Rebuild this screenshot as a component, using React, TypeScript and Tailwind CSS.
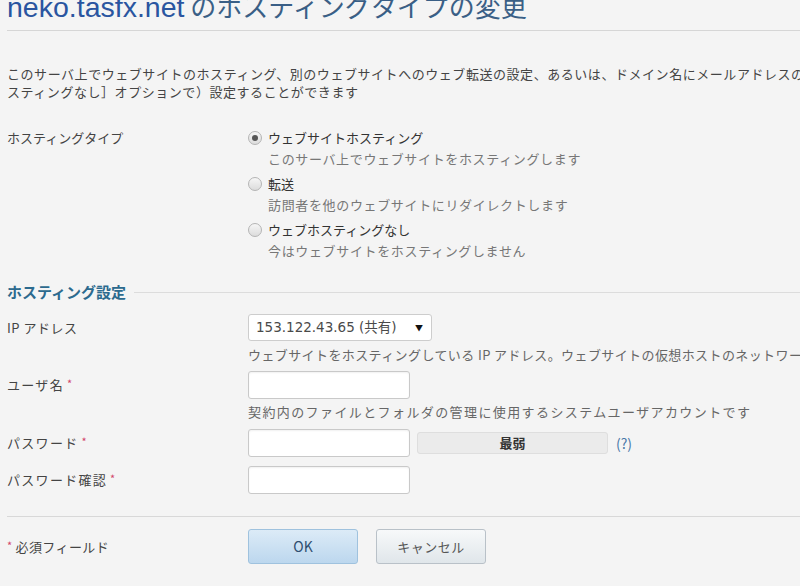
import React from 'react';

const labelCls = 'w-[241px] shrink-0 whitespace-nowrap tracking-[1.3px]';
const helpCls = 'whitespace-nowrap pl-[241px] leading-[18px] text-[#666]';
const inputCls =
  'h-[28px] w-[162px] rounded-[3px] border border-[#c9c9c9] bg-white shadow-[inset_0_1px_2px_rgba(0,0,0,0.06)]';

function Req() {
  return <span className="ml-[3px] text-[11px] text-[#d2456a] align-top">*</span>;
}

function Radio({ checked }: { checked?: boolean }) {
  return (
    <span className="flex h-[14px] w-[14px] shrink-0 items-center justify-center rounded-full border border-[#b4b4b4] bg-gradient-to-b from-[#f6f6f6] to-[#dcdcdc]">
      {checked && <span className="h-[6px] w-[6px] rounded-full bg-[#555]" />}
    </span>
  );
}

function Option({ label, desc, checked, first }: { label: string; desc: string; checked?: boolean; first?: boolean }) {
  return (
    <div className={first ? '' : 'mt-[7px]'}>
      <div className="flex h-[18px] items-center gap-[6px] leading-[18px] text-[#333]">
        <Radio checked={checked} />
        <span>{label}</span>
      </div>
      <div className="mt-[3px] whitespace-nowrap pl-[20px] leading-[18px] tracking-[0.65px] text-[#777]">{desc}</div>
    </div>
  );
}

export default function App() {
  return (
    <div className="h-[586px] w-[800px] overflow-hidden bg-[#f4f4f4] font-['Noto_Sans_CJK_JP',sans-serif] text-[13px] text-[#444]">
      <div className="w-[1100px] pl-[7px]">
        <h1 className="-mt-[9px] h-[40px] whitespace-nowrap border-b border-[#d6d6d6] leading-[30px] text-[#2a55a0]">
          <span className="font-['Liberation_Sans',sans-serif] text-[28.5px]">neko.tasfx.net</span>
          <span className="text-[26px] text-[#3a5f86]"> のホスティングタイプの変更</span>
        </h1>

        <p className="mt-[34px] whitespace-nowrap leading-[18px] tracking-[0.55px]">
          このサーバ上でウェブサイトのホスティング、別のウェブサイトへのウェブ転送の設定、あるいは、ドメイン名にメールアドレスのみを関連付ける（［ウェブホ
          <br />
          スティングなし］オプションで）設定することができます
        </p>

        <div className="mt-[28px] flex">
          <div className="w-[241px] shrink-0 leading-[18px]">ホスティングタイプ</div>
          <div>
            <Option first checked label="ウェブサイトホスティング" desc="このサーバ上でウェブサイトをホスティングします" />
            <Option label="転送" desc="訪問者を他のウェブサイトにリダイレクトします" />
            <Option label="ウェブホスティングなし" desc="今はウェブサイトをホスティングしません" />
          </div>
        </div>

        {/* Hosting settings */}
        <div className="mt-[23px] flex h-[18px] items-center gap-[8px]">
          <span className="whitespace-nowrap text-[15px] font-bold text-[#2c6a8e]">ホスティング設定</span>
          <span className="h-px flex-1 bg-[#dcdcdc]" />
        </div>

        <div className="mt-[13px] flex items-center">
          <div className="w-[241px] shrink-0 tracking-[0.5px]">IP アドレス</div>
          <div className="flex h-[27px] w-[184px] items-center justify-between rounded-[3px] border border-[#cdcdcd] bg-white pl-[7px] pr-[8px] text-[#4a4a4a]">
            <span className="font-['DejaVu_Sans','Noto_Sans_CJK_JP',sans-serif] text-[13.5px]">153.122.43.65 (共有)</span>
            <span className="text-[8px] text-[#111]">▼</span>
          </div>
        </div>
        <div className={`mt-[5px] tracking-[0.4px] ${helpCls}`}>
          ウェブサイトをホスティングしている IP アドレス。ウェブサイトの仮想ホストのネットワーク設定で使用されます
        </div>

        <div className="mt-[7px] flex items-center">
          <div className={labelCls}>
            ユーザ名<Req />
          </div>
          <div className={inputCls} />
        </div>
        <div className={`mt-[4px] tracking-[1.4px] ${helpCls}`}>
          契約内のファイルとフォルダの管理に使用するシステムユーザアカウントです
        </div>

        <div className="mt-[8px] flex items-center">
          <div className={labelCls}>
            パスワード<Req />
          </div>
          <div className={inputCls} />
          <div className="ml-[7px] flex h-[22px] w-[191px] items-center justify-center rounded-[3px] border border-[#dedede] bg-[#ebebeb] font-bold text-[#333]">
            最弱
          </div>
          <span className="ml-[8px] text-[14px] text-[#4a78a8]">(?)</span>
        </div>

        <div className="mt-[9px] flex items-center">
          <div className={labelCls}>
            パスワード確認<Req />
          </div>
          <div className={inputCls} />
        </div>

        <div className="mt-[22px] h-px bg-[#d8d8d8]" />

        <div className="mt-[12px] flex items-center">
          <div className="w-[241px] shrink-0 whitespace-nowrap tracking-[0.4px]">
            <span className="mr-[3px] text-[11px] text-[#d2456a] align-top">*</span>必須フィールド
          </div>
          <button className="h-[35px] w-[110px] rounded-[3px] border border-[#9fc2de] bg-gradient-to-b from-[#dcebf7] to-[#bcd7ee] text-[14px] text-[#2f4f6f]">
            OK
          </button>
          <button className="ml-[18px] h-[35px] w-[110px] rounded-[3px] border border-[#b9c1c8] bg-gradient-to-b from-[#f7f9fa] to-[#e0e6ea] text-[#555] tracking-[0.5px]">
            キャンセル
          </button>
        </div>
      </div>
    </div>
  );
}
